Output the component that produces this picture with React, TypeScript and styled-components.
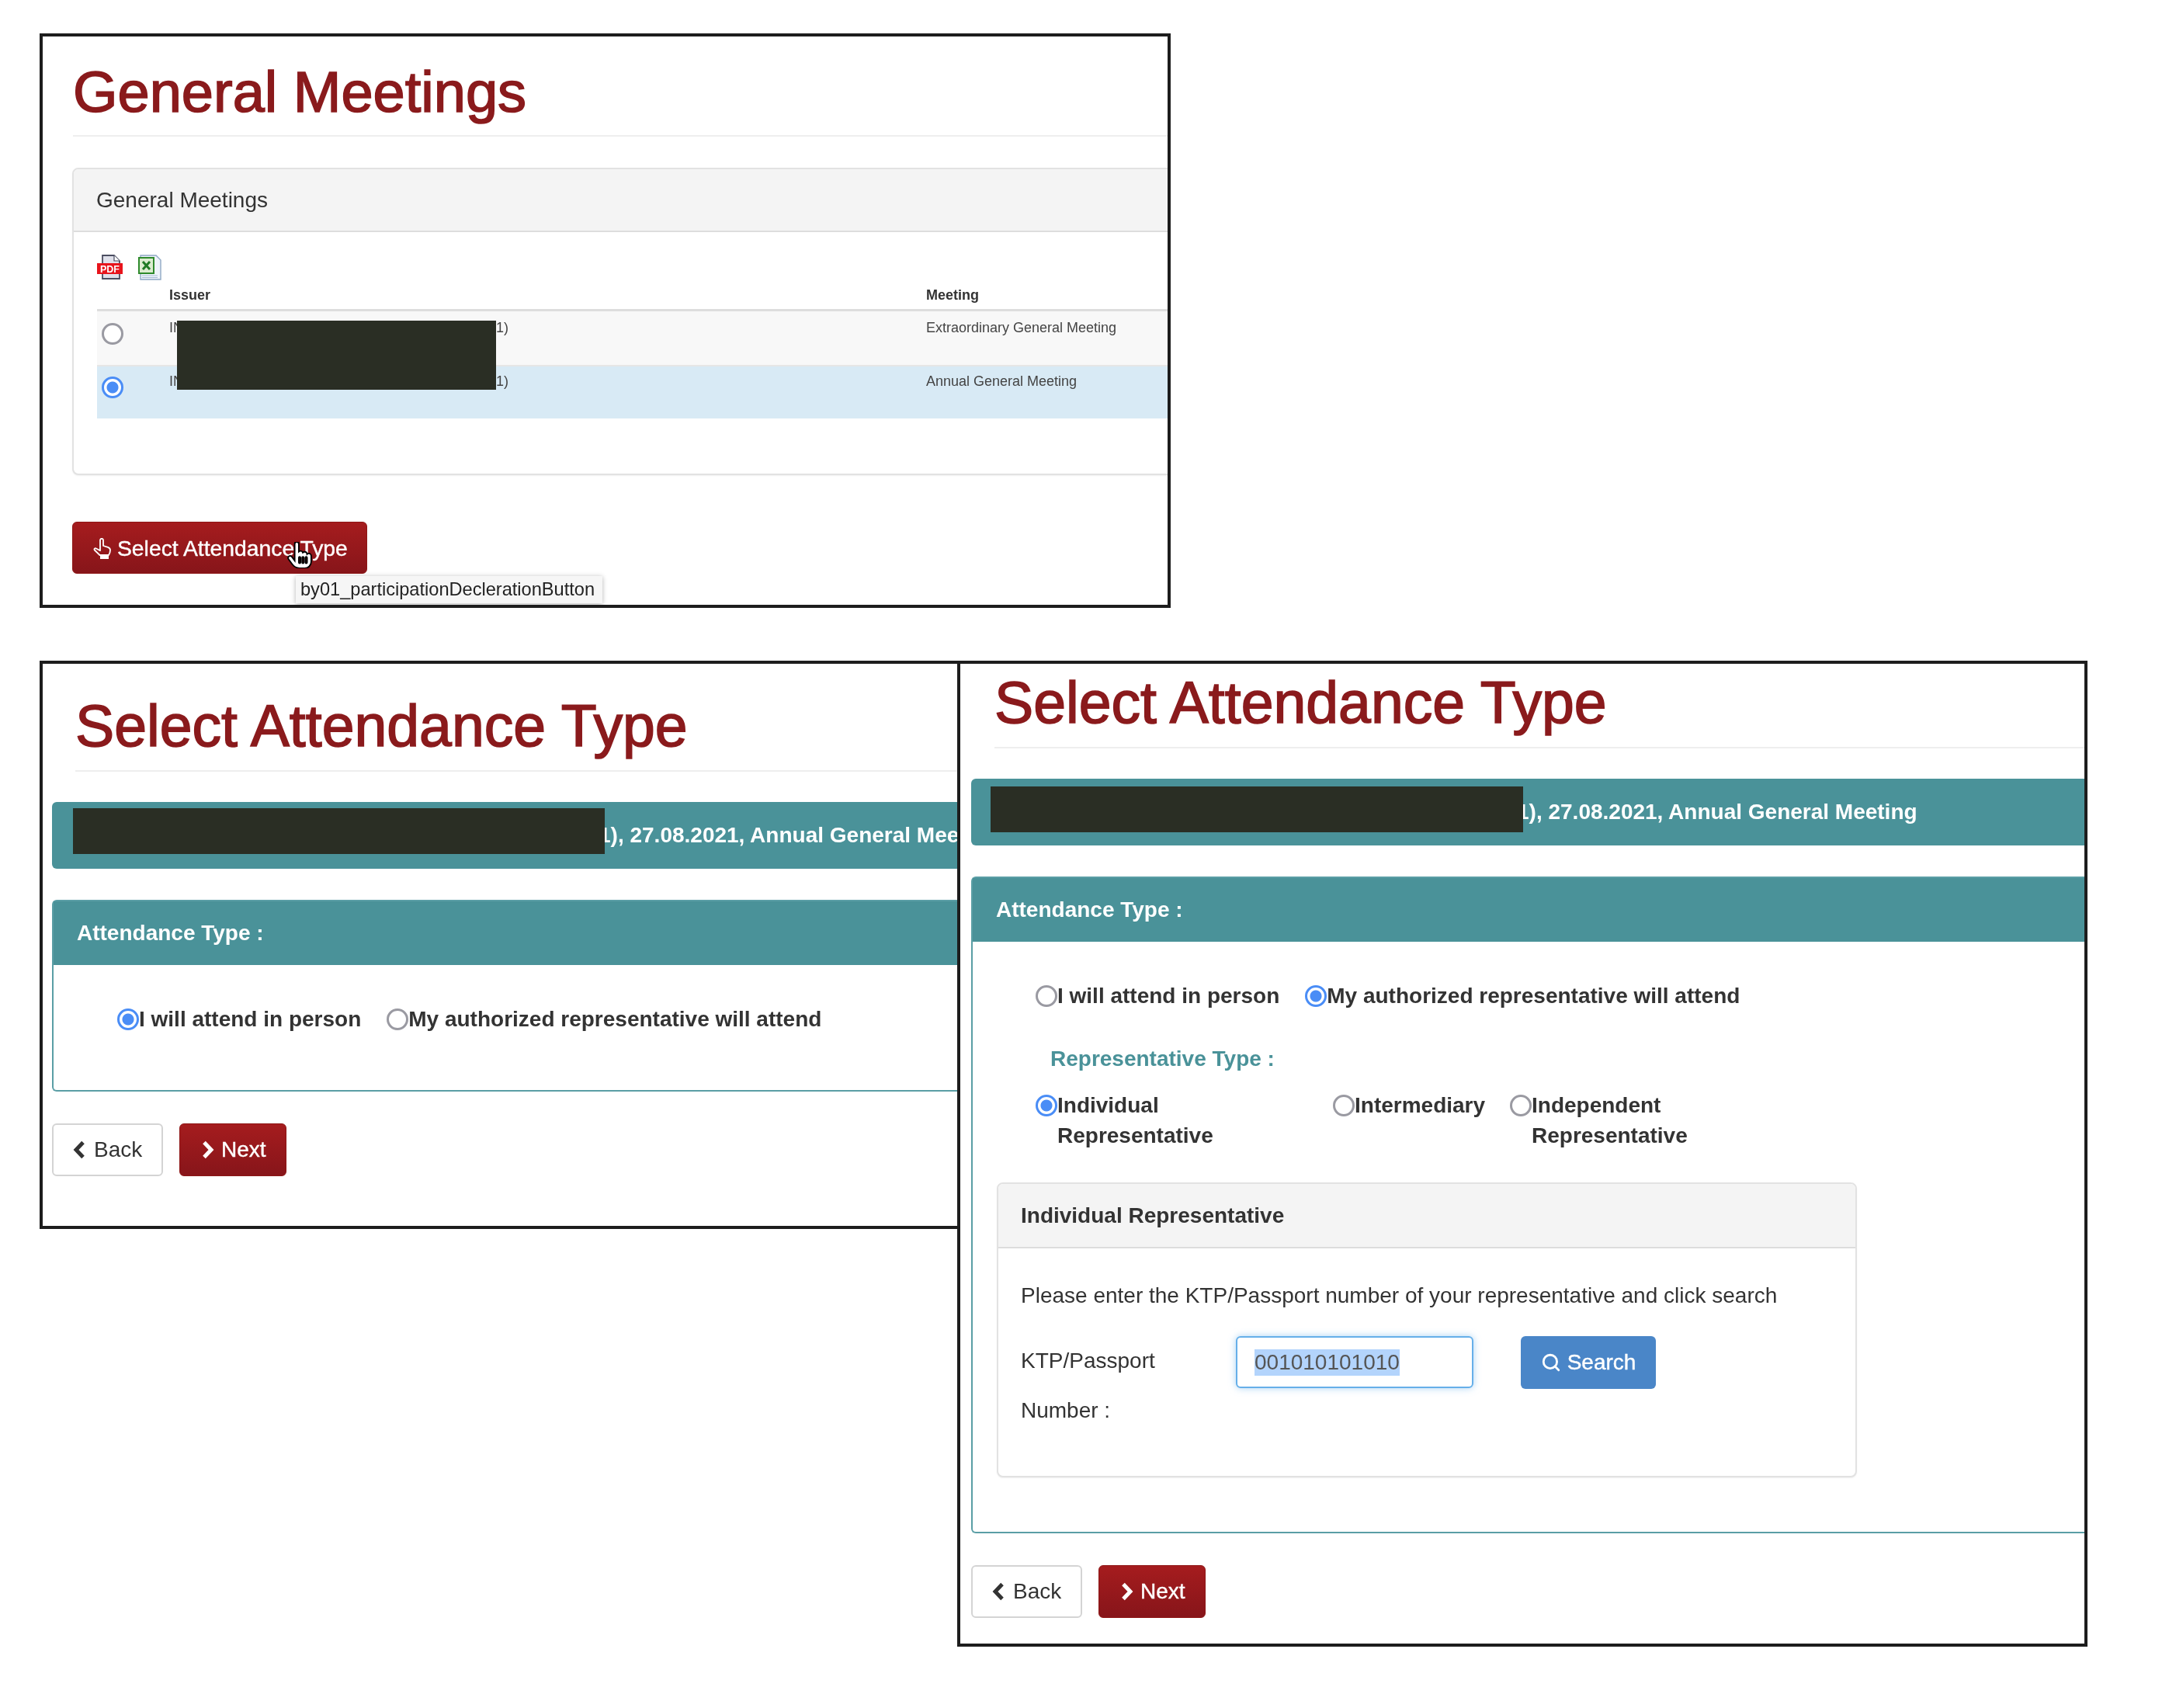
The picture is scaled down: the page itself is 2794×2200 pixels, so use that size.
import React from 'react';
import styled, { createGlobalStyle } from 'styled-components';
import { FaHandPointer } from 'react-icons/fa6';
import { Search } from 'lucide-react';

const GlobalStyle = createGlobalStyle`
  html, body {
    margin: 0;
    padding: 0;
    background: #ffffff;
  }
  * {
    box-sizing: border-box;
  }
`;

const Desktop = styled.div`
  position: relative;
  width: 2794px;
  height: 2200px;
  background: #ffffff;
  color: #333333;
  font-family: "Liberation Sans", Arial, sans-serif;
  font-size: 28px;
  overflow: hidden;
  filter: blur(0.6px);
`;

// the three screenshots are pasted on a free canvas
const ShotWindow = styled.section<{ $x: number; $y: number; $w: number; $h: number }>`
  position: absolute;
  left: ${(p) => p.$x}px;
  top: ${(p) => p.$y}px;
  width: ${(p) => p.$w}px;
  height: ${(p) => p.$h}px;
  border: 4px solid #1d1d1d;
  background: #ffffff;
  overflow: hidden;
`;

const PageHeader = styled.header<{ $left: number; $top: number; $bottom: number }>`
  margin-left: ${(p) => p.$left}px;
  padding: ${(p) => p.$top}px 0 ${(p) => p.$bottom}px;
  border-bottom: 2px solid #eeeeee;
`;

const Title = styled.h1<{ $size: number }>`
  margin: 0;
  font-size: ${(p) => p.$size}px;
  line-height: 83px;
  font-weight: 400;
  color: #8a1a1c;
  -webkit-text-stroke: 1.6px #8a1a1c;
  white-space: nowrap;
`;

const GreyPanel = styled.div<{ $left: number; $top: number; $right: number; $width?: number }>`
  margin: ${(p) => p.$top}px ${(p) => p.$right}px 0 ${(p) => p.$left}px;
  width: ${(p) => (p.$width ? `${p.$width}px` : 'auto')};
  border: 2px solid #e2e2e2;
  border-radius: 8px;
  background: #ffffff;
  box-shadow: 0 1px 2px rgba(0, 0, 0, 0.06);
`;

const GreyPanelHead = styled.div<{ $bold?: boolean }>`
  height: ${(p) => (p.$bold ? 83 : 81)}px;
  padding-left: 29px;
  display: flex;
  align-items: center;
  background: #f4f4f4;
  border-bottom: 2px solid #dddddd;
  border-radius: 6px 6px 0 0;
  font-size: 28px;
  font-weight: ${(p) => (p.$bold ? 700 : 400)};
`;

const MeetingsBody = styled.div`
  position: relative;
  padding: 29px 0 71px 30px;
`;

const ExportIcons = styled.div`
  display: flex;
  gap: 20px;
  height: 33px;
`;

const MeetingsHead = styled.div`
  display: grid;
  grid-template-columns: 93px 975px 1fr;
  height: 40px;
  border-bottom: 3px solid #dddddd;
  font-size: 18px;
  line-height: 38px;
  font-weight: 700;
  color: #333333;
`;

const MeetingsRow = styled.div<{ $selected?: boolean; $first?: boolean }>`
  display: grid;
  grid-template-columns: 93px 975px 1fr;
  height: 69px;
  background: ${(p) => (p.$selected ? '#d8eaf5' : '#f8f8f8')};
  box-shadow: ${(p) => (p.$first ? 'none' : 'inset 0 2px #e6e6e6')};
  font-size: 18px;
  line-height: 26px;
  color: #444444;
`;

const CellText = styled.div`
  padding-top: 8px;
  white-space: nowrap;
`;

const IssuerTail = styled.span`
  margin-left: 403px;
`;

const RadioCell = styled.div`
  padding: 15px 0 0 6px;
`;

const Radio = styled.span<{ $checked?: boolean }>`
  display: block;
  flex: none;
  width: 28px;
  height: 28px;
  border-radius: 50%;
  border: 3px solid ${(p) => (p.$checked ? '#4a8df6' : '#9a9aa2')};
  background: ${(p) =>
    p.$checked
      ? 'radial-gradient(circle, #4a8df6 0 7px, #ffffff 8px)'
      : '#ffffff'};
`;

const Redaction = styled.div<{ $w: number; $h: number }>`
  flex: none;
  width: ${(p) => p.$w}px;
  height: ${(p) => p.$h}px;
  background: #2a2e24;
`;

const TableRedaction = styled(Redaction)`
  position: absolute;
  left: 133px;
  top: 114px;
`;

const BannerRedaction = styled(Redaction)<{ $offset: number }>`
  position: relative;
  z-index: 1;
  align-self: flex-start;
  margin-top: ${(p) => p.$offset}px;
`;

const RedButton = styled.button`
  display: inline-flex;
  align-items: center;
  height: 67px;
  padding: 0 24px 0 25px;
  gap: 7px;
  border: 1px solid #8e1616;
  border-radius: 6px;
  background: linear-gradient(#a51c1e, #87151a);
  color: #ffffff;
  font: 400 28.3px "Liberation Sans", Arial, sans-serif;
  -webkit-text-stroke: 0.4px #ffffff;
  white-space: nowrap;
`;

const SelectTypeButton = styled(RedButton)`
  padding-top: 2px;
`;

const PrimaryAction = styled.div`
  margin: 60px 0 0 38px;
`;

const Tooltip = styled.div`
  position: absolute;
  left: 326px;
  top: 695px;
  width: 395px;
  height: 35px;
  padding-left: 6px;
  background: #f6f6f6;
  box-shadow: 0 1px 6px rgba(0, 0, 0, 0.3);
  font-size: 23.6px;
  line-height: 35px;
  color: #222222;
  white-space: nowrap;
`;

const Pointer = styled.div`
  position: absolute;
  left: 314px;
  top: 651px;
  color: #ffffff;
  line-height: 0;
`;

const TealBanner = styled.div<{ $left: number; $top: number; $pad: number }>`
  display: flex;
  align-items: center;
  height: 86px;
  margin: ${(p) => p.$top}px 0 0 ${(p) => p.$left}px;
  padding-left: ${(p) => p.$pad}px;
  background: #4a9299;
  border-radius: 6px 0 0 6px;
  color: #ffffff;
  font-size: 28px;
  font-weight: 700;
  white-space: nowrap;
`;

// the leading digit sits mostly under the black box
const BannerText = styled.span`
  margin-left: -8px;
`;

const TealPanel = styled.div<{ $left: number }>`
  margin: 40px 0 0 ${(p) => p.$left}px;
  border: 2px solid #5a9ea5;
  border-right: none;
  border-radius: 6px 0 0 6px;
`;

const TealPanelHead = styled.div`
  height: 82px;
  padding-left: 30px;
  display: flex;
  align-items: center;
  background: #4a9299;
  color: #ffffff;
  font-size: 28px;
  font-weight: 700;
`;

const TealPanelBody = styled.div<{ $bottom: number }>`
  padding: 49px 0 ${(p) => p.$bottom}px 31px;
`;

const RadioRow = styled.div<{ $indent: number }>`
  display: flex;
  align-items: center;
  gap: 33px;
  height: 40px;
  margin-left: ${(p) => p.$indent}px;
`;

const RadioOption = styled.label`
  display: flex;
  align-items: flex-start;
  font-weight: 700;
  line-height: 39px;
  white-space: nowrap;
  color: #333333;

  ${Radio} {
    margin-top: 6px;
  }
`;

const RepTypeLabel = styled.div`
  margin: 42px 0 0 69px;
  line-height: 40px;
  font-weight: 700;
  color: #4a9299;
`;

const RepTypeGrid = styled.div`
  display: grid;
  grid-template-columns: 383px 228px auto;
  justify-content: start;
  margin: 20px 0 0 50px;
`;

const RepPanelBody = styled.div`
  padding: 41px 0 52px 29px;
`;

const Paragraph = styled.p`
  margin: 0;
  line-height: 40px;
  white-space: nowrap;
`;

const SearchForm = styled.div`
  display: grid;
  grid-template-columns: 277px 306px auto;
  justify-content: start;
  margin-top: 32px;
`;

const FieldLabel = styled.div`
  line-height: 64px;
`;

const TextField = styled.div`
  height: 67px;
  padding-left: 22px;
  display: flex;
  align-items: center;
  border: 2px solid #66afe9;
  border-radius: 6px;
  background: #ffffff;
  box-shadow: 0 0 10px rgba(102, 175, 233, 0.55);
  color: #555555;
`;

const SelectedValue = styled.span`
  background: #b3d4fc;
  line-height: 34px;
`;

const SearchButton = styled.button`
  display: inline-flex;
  align-items: center;
  justify-content: center;
  gap: 8px;
  width: 174px;
  height: 68px;
  margin-left: 61px;
  border: none;
  border-radius: 6px;
  background: #4a86c8;
  color: #ffffff;
  font: 400 28px "Liberation Sans", Arial, sans-serif;
  -webkit-text-stroke: 0.4px #ffffff;
`;

const FooterButtons = styled.div<{ $left: number }>`
  display: flex;
  gap: 21px;
  margin: 41px 0 0 ${(p) => p.$left}px;
`;

const BackButton = styled.button`
  display: flex;
  align-items: center;
  gap: 9px;
  width: 143px;
  height: 68px;
  padding: 0 0 0 25px;
  border: 2px solid #d4d4d4;
  border-radius: 6px;
  background: #ffffff;
  color: #333333;
  font: 400 28px "Liberation Sans", Arial, sans-serif;
`;

const NextButton = styled(RedButton)`
  width: 138px;
  height: 68px;
  padding: 0 0 0 26px;
  gap: 9px;
  font-size: 28px;
`;

const PdfIcon = () => (
  <svg width="33" height="33" viewBox="0 0 33 33">
    <path d="M7 1h15l7 7v23H7z" fill="#dfe0ea" stroke="#4a4d60" strokeWidth="1.8" />
    <path d="M22 1v7h7" fill="#fff" stroke="#4a4d60" strokeWidth="1.2" />
    <rect x="0" y="11" width="33" height="14" fill="#e8141c" />
    <text x="16.5" y="22.8" textAnchor="middle" fontSize="13" fontWeight="700" fill="#ffffff" fontFamily="Liberation Sans" textLength="25" lengthAdjust="spacingAndGlyphs">
      PDF
    </text>
  </svg>
);

const ExcelIcon = () => (
  <svg width="30" height="33" viewBox="0 0 30 33">
    <path d="M3 1h20l6 6v25H3z" fill="#eef3fa" stroke="#8fa8c4" strokeWidth="1.4" />
    <path d="M5 27h20M5 29.5h20" stroke="#a9bdd6" strokeWidth="1.2" />
    <rect x="1" y="4" width="19" height="20" fill="#dcecd0" stroke="#2f8a2c" strokeWidth="2" />
    <path d="M6 9l9 10M15 9L6 19" stroke="#1f7a24" strokeWidth="3" />
  </svg>
);

const HandUpIcon = () => (
  <svg width="25" height="27" viewBox="0 0 25 27" fill="none">
    <path
      d="M10 2.8a2 2 0 0 1 4 0V10l6 1.8c2 .7 3 1.7 3 3.7 0 2.8-1 5-2 6.5H9.500L2.800 15.500c-1-1.300.6-3 2.100-2L10 16.200z"
      stroke="#ffffff"
      strokeWidth="1.8"
      strokeLinejoin="round"
    />
    <rect x="10" y="22" width="11" height="5" fill="#ffffff" />
  </svg>
);

const Chevron = ({ right }: { right?: boolean }) => (
  <svg width="18" height="24" viewBox="0 0 18 24" fill="none">
    <path
      d={right ? 'M5 2.500L14 12l-9 9.500' : 'M13 2.500L4 12l9 9.500'}
      stroke="currentColor"
      strokeWidth="5"
    />
  </svg>
);

const BackNext = ({ left }: { left: number }) => (
  <FooterButtons $left={left}>
    <BackButton>
      <Chevron />
      Back
    </BackButton>
    <NextButton>
      <Chevron right />
      Next
    </NextButton>
  </FooterButtons>
);

const meetings = [
  { meeting: 'Extraordinary General Meeting', selected: false },
  { meeting: 'Annual General Meeting', selected: true },
];

const App = () => {
  return (
    <Desktop>
      <GlobalStyle />

      <ShotWindow $x={51} $y={43} $w={1457} $h={740}>
        <PageHeader $left={39} $top={30} $bottom={14}>
          <Title $size={74}>General Meetings</Title>
        </PageHeader>
        <GreyPanel $left={38} $top={40} $right={-12}>
          <GreyPanelHead>General Meetings</GreyPanelHead>
          <MeetingsBody>
            <ExportIcons>
              <PdfIcon />
              <ExcelIcon />
            </ExportIcons>
            <MeetingsHead>
              <span />
              <span>Issuer</span>
              <span>Meeting</span>
            </MeetingsHead>
            {meetings.map((row, i) => (
              <MeetingsRow key={row.meeting} $selected={row.selected} $first={i === 0}>
                <RadioCell>
                  <Radio $checked={row.selected} />
                </RadioCell>
                <CellText>
                  IN<IssuerTail>1)</IssuerTail>
                </CellText>
                <CellText>{row.meeting}</CellText>
              </MeetingsRow>
            ))}
            <TableRedaction $w={411} $h={89} />
          </MeetingsBody>
        </GreyPanel>
        <PrimaryAction>
          <SelectTypeButton>
            <HandUpIcon />
            Select Attendance Type
          </SelectTypeButton>
        </PrimaryAction>
        <Pointer>
          <FaHandPointer size={34} stroke="#000000" strokeWidth={28} />
        </Pointer>
        <Tooltip>by01_participationDeclerationButton</Tooltip>
      </ShotWindow>

      <ShotWindow $x={51} $y={851} $w={1300} $h={732}>
        <PageHeader $left={42} $top={39} $bottom={15}>
          <Title $size={75.2}>Select Attendance Type</Title>
        </PageHeader>
        <TealBanner $left={12} $top={39} $pad={27}>
          <BannerRedaction $w={685} $h={59} $offset={8} />
          <BannerText>1), 27.08.2021, Annual General Meeting</BannerText>
        </TealBanner>
        <TealPanel $left={12}>
          <TealPanelHead>Attendance Type :</TealPanelHead>
          <TealPanelBody $bottom={72}>
            <RadioRow $indent={51}>
              <RadioOption>
                <Radio $checked />I will attend in person
              </RadioOption>
              <RadioOption>
                <Radio />My authorized representative will attend
              </RadioOption>
            </RadioRow>
          </TealPanelBody>
        </TealPanel>
        <BackNext left={12} />
      </ShotWindow>

      <ShotWindow $x={1233} $y={851} $w={1456} $h={1270}>
        <PageHeader $left={44} $top={9} $bottom={15}>
          <Title $size={75.2}>Select Attendance Type</Title>
        </PageHeader>
        <TealBanner $left={14} $top={39} $pad={25}>
          <BannerRedaction $w={686} $h={59} $offset={10} />
          <BannerText>1), 27.08.2021, Annual General Meeting</BannerText>
        </TealBanner>
        <TealPanel $left={14}>
          <TealPanelHead>Attendance Type :</TealPanelHead>
          <TealPanelBody $bottom={70}>
            <RadioRow $indent={50}>
              <RadioOption>
                <Radio />I will attend in person
              </RadioOption>
              <RadioOption>
                <Radio $checked />My authorized representative will attend
              </RadioOption>
            </RadioRow>
            <RepTypeLabel>Representative Type :</RepTypeLabel>
            <RepTypeGrid>
              <RadioOption>
                <Radio $checked />
                <span>Individual<br />Representative</span>
              </RadioOption>
              <RadioOption>
                <Radio />
                <span>Intermediary</span>
              </RadioOption>
              <RadioOption>
                <Radio />
                <span>Independent<br />Representative</span>
              </RadioOption>
            </RepTypeGrid>
            <GreyPanel $left={0} $top={41} $right={0} $width={1108}>
              <GreyPanelHead $bold>Individual Representative</GreyPanelHead>
              <RepPanelBody>
                <Paragraph>Please enter the KTP/Passport number of your representative and click search</Paragraph>
                <SearchForm>
                  <FieldLabel>KTP/Passport Number :</FieldLabel>
                  <TextField>
                    <SelectedValue>001010101010</SelectedValue>
                  </TextField>
                  <SearchButton>
                    <Search size={26} strokeWidth={2.6} />
                    Search
                  </SearchButton>
                </SearchForm>
              </RepPanelBody>
            </GreyPanel>
          </TealPanelBody>
        </TealPanel>
        <BackNext left={14} />
      </ShotWindow>
    </Desktop>
  );
};

export default App;
